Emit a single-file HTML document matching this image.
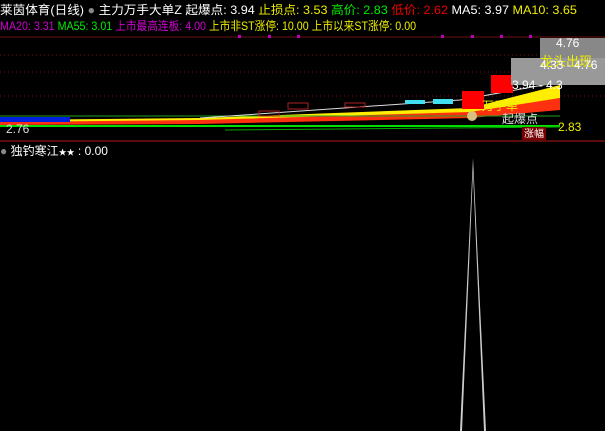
<!DOCTYPE html><html><head><style>body{margin:0;background:#000;width:605px;height:431px;overflow:hidden;font-family:"Liberation Sans","Noto Sans CJK SC",sans-serif}
.t{position:absolute;white-space:nowrap;font-size:12px;line-height:14px}</style></head><body>
<svg width="605" height="431" style="position:absolute;left:0;top:0">
<g stroke="#7a1010" stroke-dasharray="1,3"><line x1="0" y1="55" x2="605" y2="55"/><line x1="0" y1="72" x2="605" y2="72"/><line x1="0" y1="96" x2="605" y2="96"/></g>
<line x1="0" y1="37" x2="605" y2="37" stroke="#6a1010"/>
<g fill="#c000c0"><rect x="238" y="35" width="3" height="3"/><rect x="268" y="35" width="3" height="3"/><rect x="297" y="35" width="3" height="3"/><rect x="441" y="35" width="3" height="3"/><rect x="471" y="35" width="3" height="3"/><rect x="500" y="35" width="3" height="3"/><rect x="529" y="35" width="3" height="3"/></g>
<rect x="0" y="140" width="605" height="2" fill="#5a0c0c"/>
<polygon points="0,120 200,118 470,108 560,85 560,98 470,115 200,121 0,124" fill="#ffee00"/>
<polygon points="0,122 200,120 470,112 560,98 560,110 470,118 200,124 0,125" fill="#ff3010"/>
<rect x="0" y="117" width="70" height="5" fill="#0020e0"/>
<line x1="0" y1="126" x2="560" y2="126" stroke="#00dd00" stroke-width="2"/>
<line x1="225" y1="130" x2="560" y2="127" stroke="#00aa00"/>
<line x1="0" y1="116" x2="560" y2="116" stroke="#20a020"/>
<polyline points="200,118 460,100 560,82" stroke="#ddd" fill="none"/>
<rect x="462" y="91" width="22" height="18" fill="#f00"/><rect x="491" y="75" width="22" height="18" fill="#f00"/>
<g fill="none" stroke="#b02020"><rect x="259" y="111" width="20" height="5"/><rect x="288" y="103" width="20" height="6"/><rect x="345" y="103" width="20" height="4"/></g>
<g fill="#40e0f0"><rect x="405" y="100" width="20" height="4"/><rect x="433" y="99" width="20" height="5"/></g>
<rect x="540" y="38" width="65" height="24" fill="#888"/><rect x="511" y="58" width="94" height="27" fill="#999"/>
<rect x="522" y="127" width="24" height="13" fill="#700"/>
<polygon points="473,158 460,431 462,431 473,172 484,431 486,431" fill="#ccc"/>
<circle cx="472" cy="116" r="5" fill="#d8c080"/>
</svg>
<div class="t" style="left:0;top:3px;color:#fff;transform:scaleX(1.05);transform-origin:0 0">莱茵体育(日线) <span style="color:#888">●</span> 主力万手大单Z 起爆点: 3.94 <span style="color:#ee0">止损点: 3.53</span> <span style="color:#0e0">高价: 2.83</span> <span style="color:#e00">低价: 2.62</span> MA5: 3.97 <span style="color:#ee0">MA10: 3.65</span></div>
<div class="t" style="left:0;top:19px;color:#d000d0;transform:scaleX(0.89);transform-origin:0 0">MA20: 3.31 <span style="color:#0e0">MA55: 3.01</span> 上市最高连板: 4.00 <span style="color:#ee0">上市非ST涨停: 10.00 上市以来ST涨停: 0.00</span></div>
<div class="t" style="left:556px;top:36px;color:#fff">4.76</div>
<div class="t" style="left:540px;top:55px;color:#ee0;font-size:13px">龙头出现</div>
<div class="t" style="left:540px;top:58px;color:#fff;top:58px">4.33 - 4.76</div>
<div class="t" style="left:512px;top:78px;color:#fff">3.94 - 4.3</div>
<div class="t" style="left:482px;top:99px;color:#ee0">万手单</div>
<div class="t" style="left:502px;top:112px;color:#ddd">起爆点</div>
<div class="t" style="left:558px;top:120px;color:#ee0">2.83</div>
<div class="t" style="left:524px;top:128px;color:#fff;font-size:10px">涨幅</div>
<div class="t" style="left:6px;top:122px;color:#ddd">2.76</div>
<div class="t" style="left:0;top:144px;color:#fff"><span style="color:#888">●</span> 独钓寒江<span style="font-size:8px">★★</span> : 0.00</div>
</body></html>
